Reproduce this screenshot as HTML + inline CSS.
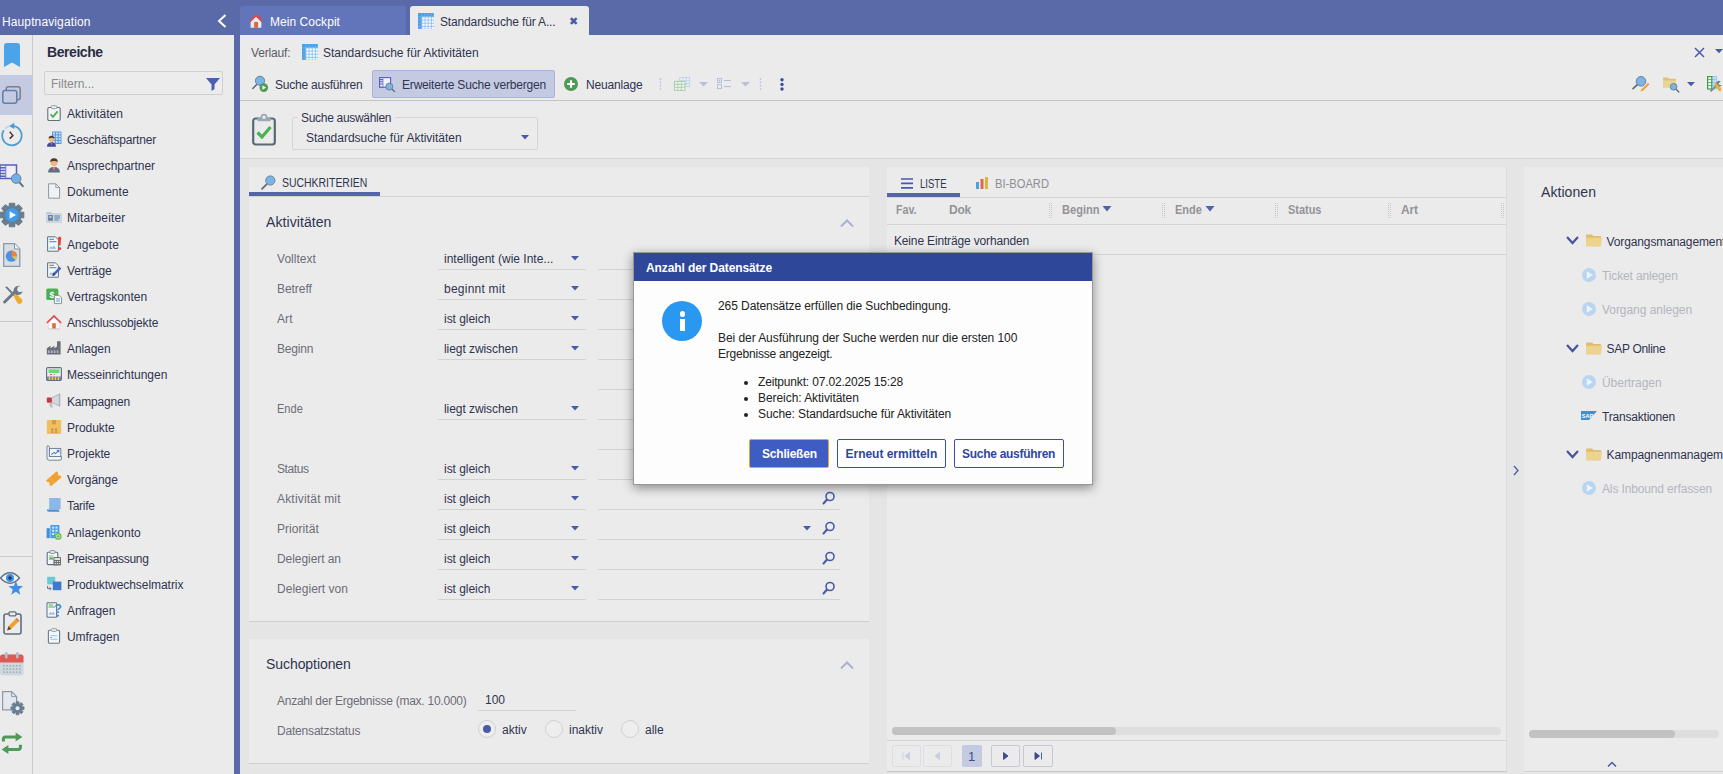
<!DOCTYPE html>
<html lang="de"><head><meta charset="utf-8"><title>Standardsuche für Aktivitäten</title>
<style>
*{box-sizing:border-box;margin:0;padding:0}
html,body{width:1723px;height:774px;overflow:hidden;background:#e5e5e5}
body{font-family:"Liberation Sans",sans-serif;font-size:12px;color:#2f3450;position:relative}
.a{position:absolute}
.t{position:absolute;white-space:nowrap;line-height:16px;height:16px}
.lbl{color:#6d6d78}
.ul{position:absolute;height:1px;background:#d2d2d2}
svg{position:absolute;overflow:visible}
</style></head>
<body>
<div class="a" style="left:0px;top:0px;width:1723px;height:35px;background:#5a69a8"></div>
<div class="t " style="left:2px;top:14px;color:#fff;letter-spacing:0.118px">Hauptnavigation</div>
<svg style="left:217px;top:14px" width="10" height="14" viewBox="0 0 10 14"><path d="M8.5 1 L2 7 L8.5 13" fill="none" stroke="#fff" stroke-width="2"/></svg>
<div class="a" style="left:240px;top:6px;width:166px;height:29px;background:#6275ba;border-radius:3px 3px 0 0"></div>
<div class="t " style="left:270px;top:14px;color:#fff;letter-spacing:0.053px">Mein Cockpit</div>
<div class="a" style="left:410px;top:6px;width:179px;height:29px;background:#ebebeb;border-radius:3px 3px 0 0"></div>
<div class="t " style="left:440px;top:14px;;letter-spacing:-0.148px">Standardsuche für A...</div>
<div class="t " style="left:569px;top:13px;color:#4a5aa8;font-size:11px">&#10006;</div>
<div class="a" style="left:0px;top:35px;width:33px;height:739px;background:#ebebeb;border-right:1px solid #c9c9c9"></div>
<div class="a" style="left:0px;top:75px;width:32px;height:40px;background:#c5cae3"></div>
<div class="a" style="left:0px;top:321px;width:32px;height:1px;background:#c9c9c9"></div>
<div class="a" style="left:0px;top:556px;width:32px;height:1px;background:#c9c9c9"></div>
<div class="a" style="left:33px;top:35px;width:201px;height:739px;background:#ebebeb"></div>
<div class="a" style="left:234px;top:35px;width:6px;height:739px;background:#5a69a8"></div>
<div class="t " style="left:47px;top:44px;font-weight:bold;font-size:14px;color:#2a2d45;letter-spacing:-0.432px">Bereiche</div>
<div class="a" style="left:44px;top:71px;width:179px;height:24px;border:1px solid #d0d0d0;border-radius:2px;background:#ececec"></div>
<div class="t " style="left:51px;top:76px;color:#8a8a8a">Filtern...</div>
<svg style="left:206px;top:77px" width="14" height="14" viewBox="0 0 14 14"><path d="M0 1 H14 L8.5 7.5 V12 L5.5 14 V7.5 Z" fill="#4a5fb0"/></svg>
<div class="t " style="left:67px;top:106px;;letter-spacing:0.058px">Aktivitäten</div>
<svg style="left:46px;top:105px" width="16" height="16" viewBox="0 0 16 16"><rect x="1.8" y="2.5" width="12.4" height="13" rx="1.3" fill="#f4f4f4" stroke="#5f7080" stroke-width="1.1"/><rect x="5.2" y="0.7" width="5.6" height="3" rx="1" fill="#ebebeb" stroke="#8a98a8" stroke-width="0.9"/><path d="M4.5 9.3 L7 11.8 L11.6 6.4" fill="none" stroke="#4caf50" stroke-width="1.8"/></svg>
<div class="t " style="left:67px;top:132px;;letter-spacing:-0.190px">Geschäftspartner</div>
<svg style="left:46px;top:131px" width="16" height="16" viewBox="0 0 16 16"><rect x="6" y="0.5" width="9.5" height="12.5" fill="#5a9ad8"/><rect x="7.0" y="1.6" width="1.8" height="1.7" fill="#d4e8fa"/><rect x="9.9" y="1.6" width="1.8" height="1.7" fill="#d4e8fa"/><rect x="12.8" y="1.6" width="1.8" height="1.7" fill="#d4e8fa"/><rect x="7.0" y="4.4" width="1.8" height="1.7" fill="#d4e8fa"/><rect x="9.9" y="4.4" width="1.8" height="1.7" fill="#d4e8fa"/><rect x="12.8" y="4.4" width="1.8" height="1.7" fill="#d4e8fa"/><rect x="7.0" y="7.199999999999999" width="1.8" height="1.7" fill="#d4e8fa"/><rect x="9.9" y="7.199999999999999" width="1.8" height="1.7" fill="#d4e8fa"/><rect x="12.8" y="7.199999999999999" width="1.8" height="1.7" fill="#d4e8fa"/><rect x="7.0" y="9.999999999999998" width="1.8" height="1.7" fill="#d4e8fa"/><rect x="9.9" y="9.999999999999998" width="1.8" height="1.7" fill="#d4e8fa"/><rect x="12.8" y="9.999999999999998" width="1.8" height="1.7" fill="#d4e8fa"/><path d="M0.9900000000000002 15.68 Q0.9900000000000002 11.58 5.5 11.251999999999999 Q10.01 11.58 10.01 15.68Z" fill="#3f4d96"/><path d="M4.352 11.416 L5.5 14.45 L6.648 11.416Z" fill="#e05a55"/><circle cx="5.5" cy="8.054" r="2.7059999999999995" fill="#f0b880"/><path d="M2.6300000000000003 7.644 Q2.712 4.692 5.5 4.856 Q8.288 4.692 8.37 7.644 Q5.5 6.0040000000000004 2.6300000000000003 7.644Z" fill="#4a3a30"/></svg>
<div class="t " style="left:67px;top:158px;;letter-spacing:-0.048px">Ansprechpartner</div>
<svg style="left:46px;top:157px" width="16" height="16" viewBox="0 0 16 16"><path d="M2.0599999999999996 15.620000000000001 Q2.0599999999999996 10.22 8 9.788 Q13.940000000000001 10.22 13.940000000000001 15.620000000000001Z" fill="#5f6f7c"/><path d="M6.4879999999999995 10.004000000000001 L8 14.0 L9.512 10.004000000000001Z" fill="#e87a8a"/><circle cx="8" cy="5.5760000000000005" r="3.564" fill="#f0b880"/><path d="M4.22 5.0360000000000005 Q4.327999999999999 1.1480000000000001 8 1.364 Q11.672 1.1480000000000001 11.780000000000001 5.0360000000000005 Q8 2.8760000000000003 4.22 5.0360000000000005Z" fill="#4a3a30"/></svg>
<div class="t " style="left:67px;top:184px;;letter-spacing:0.025px">Dokumente</div>
<svg style="left:46px;top:183px" width="16" height="16" viewBox="0 0 16 16"><path d="M2.6 0.8 H9.8 L13.6 4.6 V15.2 H2.6Z" fill="#f1f2f4" stroke="#8a98a8" stroke-width="1"/><path d="M9.8 0.8 V4.6 H13.6" fill="none" stroke="#8a98a8" stroke-width="0.9"/></svg>
<div class="t " style="left:67px;top:210px;;letter-spacing:0.165px">Mitarbeiter</div>
<svg style="left:46px;top:209px" width="16" height="16" viewBox="0 0 16 16"><path d="M0.5 3.2 H5 L6 4.4 H15.5 V13.6 H0.5Z" fill="#a9c0d2"/><rect x="1" y="4.6" width="14.5" height="9" fill="#c8d8e4"/><rect x="2.2" y="6" width="4.6" height="5.6" fill="#3f7fc8"/><circle cx="4.5" cy="8" r="1.3" fill="#f0b880"/><path d="M2.6 11.6 Q4.5 8.6 6.4 11.6Z" fill="#e05a55"/><path d="M8.4 7H14M8.4 9H14M8.4 11H12.5" stroke="#5f7f9a" stroke-width="1.1"/></svg>
<div class="t " style="left:67px;top:237px;;letter-spacing:0.064px">Angebote</div>
<svg style="left:46px;top:236px" width="16" height="16" viewBox="0 0 16 16"><path d="M1.6 0.8 H9.4 L12.4 3.8 V15.2 H1.6Z" fill="#f3f6f8" stroke="#5f7080" stroke-width="1"/><path d="M3.4 3.4H8M3.4 5.6H10.4" stroke="#4a9fe8" stroke-width="1.2"/><path d="M3.2 12.8 L5 10.2 L6.4 11.8 L8 9.6 L10 12.8Z" fill="#8ab8e0"/><path d="M12 2.2 Q12 0.6 13.6 0.6 Q15.2 0.6 15.2 2.2 L14.5 9.6 H12.7Z" fill="#e8453d"/><circle cx="13.6" cy="12.6" r="1.6" fill="#e8453d"/></svg>
<div class="t " style="left:67px;top:263px;;letter-spacing:-0.097px">Verträge</div>
<svg style="left:46px;top:262px" width="16" height="16" viewBox="0 0 16 16"><path d="M1.6 0.8 H9.4 L12.4 3.8 V15.2 H1.6Z" fill="#f3f6f8" stroke="#5f7080" stroke-width="1"/><path d="M3.4 3.4H8M3.4 5.6H10.4" stroke="#4a9fe8" stroke-width="1.2"/><path d="M3.2 12.8 L5 10.2 L6.4 11.8 L8 9.6 L10 12.8Z" fill="#8ab8e0"/><path d="M6.4 14 L7.2 11.2 L13.6 4.8 L15.4 6.6 L9 13.1Z" fill="#4a5fc0"/><path d="M6.4 14 L7.2 11.2 L9 13.1Z" fill="#2b2f48"/></svg>
<div class="t " style="left:67px;top:289px;;letter-spacing:-0.051px">Vertragskonten</div>
<svg style="left:46px;top:288px" width="16" height="16" viewBox="0 0 16 16"><rect x="0.3" y="0.6" width="12" height="11.4" rx="1.6" fill="#4caf50"/><text x="3.600" y="9.600" font-size="9" font-weight="bold" fill="#fff" font-family="Liberation Sans,sans-serif">$</text><path d="M8.4 7.4 H13.2 L15.6 9.8 V15.6 H8.4Z" fill="#f3f6f8" stroke="#7a8a9a" stroke-width="0.9"/><path d="M10 11H14M10 13H14" stroke="#5a9ad8" stroke-width="0.9"/></svg>
<div class="t " style="left:67px;top:315px;;letter-spacing:-0.137px">Anschlussobjekte</div>
<svg style="left:46px;top:314px" width="16" height="16" viewBox="0 0 16 16"><path d="M2.600 8 V15 H13.400 V8 L8 2.800Z" fill="#fbfbfb" stroke="#d4d4d8" stroke-width="0.600"/><path d="M0.2 8.4 L8 0.8 L15.8 8.4 L14.6 9.6 L8 3.2 L1.4 9.6Z" fill="#e05050"/><rect x="6.2" y="9.2" width="3.6" height="5.8" fill="#e8663a"/><rect x="2.6" y="14.4" width="10.8" height="0.9" fill="#d0d0d0"/></svg>
<div class="t " style="left:67px;top:341px;;letter-spacing:-0.078px">Anlagen</div>
<svg style="left:46px;top:340px" width="16" height="16" viewBox="0 0 16 16"><path d="M0.8 14.6 V8.2 L4.6 5.8 V8.2 L8.4 5.8 V8.2 L11 6.6 V1.2 H14.6 V14.6Z" fill="#6a7078"/><rect x="2.0" y="10.4" width="1.7" height="2.6" fill="#b8a8d8"/><rect x="4.9" y="10.4" width="1.7" height="2.6" fill="#b8a8d8"/><rect x="7.8" y="10.4" width="1.7" height="2.6" fill="#b8a8d8"/><rect x="10.7" y="10.4" width="1.7" height="2.6" fill="#b8a8d8"/></svg>
<div class="t " style="left:67px;top:367px;;letter-spacing:-0.026px">Messeinrichtungen</div>
<svg style="left:46px;top:366px" width="16" height="16" viewBox="0 0 16 16"><rect x="0.6" y="1.6" width="14.8" height="12.8" rx="1.2" fill="#e8ecee" stroke="#5f7080" stroke-width="1.1"/><rect x="2.6" y="3.4" width="10.8" height="3.6" fill="#6ad870"/><path d="M4 8.6H6M7.6 8.6H8.6" stroke="#e05050" stroke-width="1"/><rect x="1.2" y="10.6" width="13.6" height="3.4" fill="#5f7080"/><rect x="2.6" y="11" width="1.7" height="3" fill="#f0d040"/><rect x="5.6" y="11" width="1.7" height="3" fill="#f0d040"/><rect x="8.6" y="11" width="1.7" height="3" fill="#f0d040"/><rect x="11.6" y="11" width="1.7" height="3" fill="#f0d040"/></svg>
<div class="t " style="left:67px;top:394px;;letter-spacing:-0.191px">Kampagnen</div>
<svg style="left:46px;top:393px" width="16" height="16" viewBox="0 0 16 16"><path d="M5.6 5 L13.4 1 V13 L5.6 9.4Z" fill="#d4d8dc" stroke="#9aa4ac" stroke-width="0.7"/><rect x="13" y="0.6" width="1.3" height="12.8" fill="#aab2b8"/><rect x="0.8" y="4.6" width="5" height="5.2" rx="1" fill="#c83840"/><path d="M3 9.8 H6 L6.8 14.6 H4.2Z" fill="#b8c0c6"/></svg>
<div class="t " style="left:67px;top:420px;;letter-spacing:-0.041px">Produkte</div>
<svg style="left:46px;top:419px" width="16" height="16" viewBox="0 0 16 16"><rect x="0.8" y="1" width="14.4" height="14" rx="1" fill="#f0c060"/><rect x="6" y="1" width="4" height="4.4" fill="#e8905a"/><path d="M5 13.2H7.4M8.8 13.2H11.2M6.2 12.6V9.8M10 12.6V9.8M5.2 10.8L6.2 9.6L7.2 10.8M9 10.8L10 9.6L11 10.8" stroke="#b87838" stroke-width="0.8" fill="none"/></svg>
<div class="t " style="left:67px;top:446px;;letter-spacing:-0.104px">Projekte</div>
<svg style="left:46px;top:445px" width="16" height="16" viewBox="0 0 16 16"><path d="M1 1 Q1 0.6 2 0.8 Q3.4 1 3.4 2.4 V11.4 H15.4 V14.2 Q15.4 15.2 14 15.2 H3 Q1 15.2 1 13Z" fill="#f3f6f8" stroke="#6a7a8a" stroke-width="0.9"/><rect x="3.4" y="3.4" width="11.4" height="8" fill="#f3f6f8" stroke="#6a7a8a" stroke-width="0.9"/><path d="M5.4 9.6 L8 7.4 L9.4 8.6 L12.6 5.6 M10.8 5.4H12.8V7.4" fill="none" stroke="#3f7fd0" stroke-width="1.1"/></svg>
<div class="t " style="left:67px;top:472px;;letter-spacing:-0.074px">Vorgänge</div>
<svg style="left:46px;top:471px" width="16" height="16" viewBox="0 0 16 16"><g transform="rotate(-40 8 8) translate(0.8,0.5) scale(0.9)"><path d="M0.2 3.8 H15.800 V6.6 A1.4 1.4 0 0 0 15.8 9.4 V12.2 H0.2 V9.4 A1.4 1.4 0 0 0 0.2 6.6Z" fill="#f2a030"/><path d="M5 3.8V12.2" stroke="#f6c070" stroke-width="0.8" stroke-dasharray="1.4 1"/></g></svg>
<div class="t " style="left:67px;top:498px;;letter-spacing:-0.291px">Tarife</div>
<svg style="left:46px;top:497px" width="16" height="16" viewBox="0 0 16 16"><path d="M3.2 1 H14.6 V12.4 H3.2Z" fill="#8ab8e8"/><path d="M0.8 12.4 H12.6 Q12.6 14.8 14.6 14.8 H3 Q0.8 14.8 0.8 12.4Z" fill="#4a8fd8"/></svg>
<div class="t " style="left:67px;top:525px;;letter-spacing:0.033px">Anlagenkonto</div>
<svg style="left:46px;top:524px" width="16" height="16" viewBox="0 0 16 16"><rect x="0.6" y="4.2" width="3.2" height="10" fill="#3f8fd8"/><rect x="4.4" y="1" width="9" height="13.2" fill="#4a9fe8"/><rect x="6.0" y="2.6" width="2.2" height="2" fill="#cfe4f8"/><rect x="9.4" y="2.6" width="2.2" height="2" fill="#cfe4f8"/><rect x="6.0" y="5.800000000000001" width="2.2" height="2" fill="#cfe4f8"/><rect x="9.4" y="5.800000000000001" width="2.2" height="2" fill="#cfe4f8"/><rect x="6.0" y="9.0" width="2.2" height="2" fill="#cfe4f8"/><rect x="9.4" y="9.0" width="2.2" height="2" fill="#cfe4f8"/><circle cx="12.2" cy="12.4" r="3.4" fill="#6ab850"/><circle cx="12.2" cy="12.4" r="1.7" fill="none" stroke="#e4f4d8" stroke-width="0.8"/></svg>
<div class="t " style="left:67px;top:551px;;letter-spacing:-0.326px">Preisanpassung</div>
<svg style="left:46px;top:550px" width="16" height="16" viewBox="0 0 16 16"><rect x="1.2" y="2.2" width="10.6" height="12.4" rx="1" fill="#f3f6f8" stroke="#5f7080" stroke-width="1.1"/><rect x="4" y="0.6" width="5" height="2.8" rx="0.9" fill="#ebebeb" stroke="#7a8a9a" stroke-width="0.9"/><rect x="3" y="5" width="4.4" height="4.4" fill="#b8d8b0"/><path d="M3 9.4 L4.6 7 L5.6 8.2 L6.4 7.400 L7.4 9.4Z" fill="#4caf50"/><rect x="7.4" y="7" width="7.6" height="8.6" rx="0.8" fill="#6a7078"/><rect x="8.4" y="8" width="5.600" height="2" fill="#d8e4d8"/><path d="M8.8 11.6H10M10.8 11.6H12M12.8 11.6H14M8.8 13.6H10M10.8 13.6H12M12.8 13.6H14" stroke="#e0e0e0" stroke-width="1"/></svg>
<div class="t " style="left:67px;top:577px;;letter-spacing:-0.049px">Produktwechselmatrix</div>
<svg style="left:46px;top:576px" width="16" height="16" viewBox="0 0 16 16"><rect x="1.2" y="0.8" width="8" height="7.6" fill="#6ac8d0"/><rect x="6.800" y="5.6" width="8.6" height="8.6" fill="#3f78d0"/><path d="M1.600 10 V12.6 H5 M3.600 11.2 L5.2 12.6 L3.6 14" fill="none" stroke="#5f7080" stroke-width="1"/></svg>
<div class="t " style="left:67px;top:603px;;letter-spacing:-0.050px">Anfragen</div>
<svg style="left:46px;top:602px" width="16" height="16" viewBox="0 0 16 16"><path d="M1 0.800 H10.600 V15.2 H1Z" fill="#f3f6f8" stroke="#5f7080" stroke-width="1"/><path d="M2.6 3H7M2.6 5H9" stroke="#4caf50" stroke-width="1.1"/><path d="M2.6 12.6 L4.4 10 L5.8 11.600 L7.2 9.800 L9 12.6Z" fill="#8ab8e0"/><text x="8.2" y="11" font-size="12.5" font-weight="bold" fill="#3f8fd8" font-family="Liberation Sans,sans-serif">?</text><circle cx="11.8" cy="13.6" r="1.2" fill="#3f8fd8"/></svg>
<div class="t " style="left:67px;top:629px;;letter-spacing:-0.048px">Umfragen</div>
<svg style="left:46px;top:628px" width="16" height="16" viewBox="0 0 16 16"><rect x="2.4" y="2.2" width="11.2" height="13" rx="1.2" fill="#f3f6f8" stroke="#6a7a8a" stroke-width="1.1"/><rect x="5.400" y="0.6" width="5.2" height="2.800" rx="0.9" fill="#ebebeb" stroke="#8a98a8" stroke-width="0.9"/><path d="M4.600 7.6H11.400M4.600 11.400H11.400" stroke="#a8d0f0" stroke-width="1.4"/><path d="M4.600 9.5H6" stroke="#5a9ad8" stroke-width="1.2"/></svg>
<div class="a" style="left:240px;top:35px;width:1483px;height:124px;background:#ebebeb"></div>
<div class="a" style="left:240px;top:100px;width:1483px;height:1px;background:#c3c3c3"></div>
<div class="a" style="left:240px;top:158px;width:1483px;height:1px;background:#d6d6d6"></div>
<div class="t " style="left:251px;top:45px;color:#5a5a66;letter-spacing:-0.163px">Verlauf:</div>
<div class="t " style="left:323px;top:45px;;letter-spacing:-0.017px">Standardsuche für Aktivitäten</div>
<div class="t " style="left:275px;top:77px;;letter-spacing:-0.222px">Suche ausführen</div>
<div class="a" style="left:372px;top:70px;width:183px;height:28px;background:#c5cae3;border:1px solid #a9b3e0;border-radius:2px"></div>
<div class="t " style="left:402px;top:77px;;letter-spacing:-0.183px">Erweiterte Suche verbergen</div>
<div class="t " style="left:586px;top:77px;;letter-spacing:-0.174px">Neuanlage</div>
<div class="a" style="left:292px;top:117px;width:246px;height:33px;border:1px solid #d5d5d5;border-radius:2px"></div>
<div class="a" style="left:298px;top:110px;width:97px;height:14px;background:#ebebeb"></div>
<div class="t " style="left:301px;top:110px;;letter-spacing:-0.302px">Suche auswählen</div>
<div class="t " style="left:306px;top:130px;;letter-spacing:-0.017px">Standardsuche für Aktivitäten</div>
<svg style="left:521px;top:135px" width="8" height="5"><path d="M0 0H8L4 4.400Z" fill="#4a5aa8"/></svg>
<div class="a" style="left:249px;top:167px;width:620px;height:455px;background:#ebebeb;border-bottom:1px solid #cfcfcf"></div>
<div class="a" style="left:249px;top:196px;width:620px;height:1px;background:#d4d4d4"></div>
<div class="a" style="left:249px;top:192px;width:131px;height:4px;background:#5566a8"></div>
<div class="t " style="left:282px;top:175px;;transform:scaleX(0.8703);transform-origin:0 50%">SUCHKRITERIEN</div>
<div class="t " style="left:266px;top:214px;font-size:14px;letter-spacing:0.082px">Aktivitäten</div>
<div class="t lbl" style="left:277px;top:251px;;letter-spacing:0.037px">Volltext</div>
<div class="t " style="left:444px;top:251px;;letter-spacing:-0.004px">intelligent (wie Inte...</div>
<svg style="left:571px;top:256px" width="8" height="5"><path d="M0 0H8L4 4.400Z" fill="#4a5aa8"/></svg>
<div class="a" style="left:438px;top:269px;width:148px;height:1px;background:#d2d2d2"></div>
<div class="a" style="left:598px;top:269px;width:242px;height:1px;background:#d2d2d2"></div>
<div class="t lbl" style="left:277px;top:281px;;letter-spacing:-0.049px">Betreff</div>
<div class="t " style="left:444px;top:281px;;letter-spacing:0.236px">beginnt mit</div>
<svg style="left:571px;top:286px" width="8" height="5"><path d="M0 0H8L4 4.400Z" fill="#4a5aa8"/></svg>
<div class="a" style="left:438px;top:299px;width:148px;height:1px;background:#d2d2d2"></div>
<div class="a" style="left:598px;top:299px;width:242px;height:1px;background:#d2d2d2"></div>
<div class="t lbl" style="left:277px;top:311px;;letter-spacing:0.119px">Art</div>
<div class="t " style="left:444px;top:311px;;letter-spacing:-0.039px">ist gleich</div>
<svg style="left:571px;top:316px" width="8" height="5"><path d="M0 0H8L4 4.400Z" fill="#4a5aa8"/></svg>
<div class="a" style="left:438px;top:329px;width:148px;height:1px;background:#d2d2d2"></div>
<div class="a" style="left:598px;top:329px;width:242px;height:1px;background:#d2d2d2"></div>
<div class="t lbl" style="left:277px;top:341px;;letter-spacing:-0.196px">Beginn</div>
<div class="t " style="left:444px;top:341px;;letter-spacing:-0.065px">liegt zwischen</div>
<svg style="left:571px;top:346px" width="8" height="5"><path d="M0 0H8L4 4.400Z" fill="#4a5aa8"/></svg>
<div class="a" style="left:438px;top:359px;width:148px;height:1px;background:#d2d2d2"></div>
<div class="a" style="left:598px;top:359px;width:242px;height:1px;background:#d2d2d2"></div>
<div class="a" style="left:598px;top:389px;width:242px;height:1px;background:#d2d2d2"></div>
<div class="t lbl" style="left:277px;top:401px;;transform:scaleX(0.9204);transform-origin:0 50%">Ende</div>
<div class="t " style="left:444px;top:401px;;letter-spacing:-0.065px">liegt zwischen</div>
<svg style="left:571px;top:406px" width="8" height="5"><path d="M0 0H8L4 4.400Z" fill="#4a5aa8"/></svg>
<div class="a" style="left:438px;top:419px;width:148px;height:1px;background:#d2d2d2"></div>
<div class="a" style="left:598px;top:419px;width:242px;height:1px;background:#d2d2d2"></div>
<div class="a" style="left:598px;top:449px;width:242px;height:1px;background:#d2d2d2"></div>
<div class="t lbl" style="left:277px;top:461px;;letter-spacing:-0.389px">Status</div>
<div class="t " style="left:444px;top:461px;;letter-spacing:-0.039px">ist gleich</div>
<svg style="left:571px;top:466px" width="8" height="5"><path d="M0 0H8L4 4.400Z" fill="#4a5aa8"/></svg>
<div class="a" style="left:438px;top:479px;width:148px;height:1px;background:#d2d2d2"></div>
<div class="a" style="left:598px;top:479px;width:242px;height:1px;background:#d2d2d2"></div>
<div class="t lbl" style="left:277px;top:491px;;letter-spacing:0.181px">Aktivität mit</div>
<div class="t " style="left:444px;top:491px;;letter-spacing:-0.039px">ist gleich</div>
<svg style="left:571px;top:496px" width="8" height="5"><path d="M0 0H8L4 4.400Z" fill="#4a5aa8"/></svg>
<div class="a" style="left:438px;top:509px;width:148px;height:1px;background:#d2d2d2"></div>
<div class="a" style="left:598px;top:509px;width:242px;height:1px;background:#d2d2d2"></div>
<div class="t lbl" style="left:277px;top:521px;;letter-spacing:0.051px">Priorität</div>
<div class="t " style="left:444px;top:521px;;letter-spacing:-0.039px">ist gleich</div>
<svg style="left:571px;top:526px" width="8" height="5"><path d="M0 0H8L4 4.400Z" fill="#4a5aa8"/></svg>
<div class="a" style="left:438px;top:539px;width:148px;height:1px;background:#d2d2d2"></div>
<div class="a" style="left:598px;top:539px;width:242px;height:1px;background:#d2d2d2"></div>
<div class="t lbl" style="left:277px;top:551px;;letter-spacing:-0.060px">Delegiert an</div>
<div class="t " style="left:444px;top:551px;;letter-spacing:-0.039px">ist gleich</div>
<svg style="left:571px;top:556px" width="8" height="5"><path d="M0 0H8L4 4.400Z" fill="#4a5aa8"/></svg>
<div class="a" style="left:438px;top:569px;width:148px;height:1px;background:#d2d2d2"></div>
<div class="a" style="left:598px;top:569px;width:242px;height:1px;background:#d2d2d2"></div>
<div class="t lbl" style="left:277px;top:581px;;letter-spacing:0.022px">Delegiert von</div>
<div class="t " style="left:444px;top:581px;;letter-spacing:-0.039px">ist gleich</div>
<svg style="left:571px;top:586px" width="8" height="5"><path d="M0 0H8L4 4.400Z" fill="#4a5aa8"/></svg>
<div class="a" style="left:438px;top:599px;width:148px;height:1px;background:#d2d2d2"></div>
<div class="a" style="left:598px;top:599px;width:242px;height:1px;background:#d2d2d2"></div>
<svg style="left:822px;top:491px" width="14" height="14" viewBox="0 0 14 14"><circle cx="8" cy="5.5" r="4" fill="none" stroke="#4a5aa8" stroke-width="1.6"/><path d="M5 8.5 L1.5 12.5" stroke="#4a5aa8" stroke-width="2" stroke-linecap="round"/></svg>
<svg style="left:822px;top:521px" width="14" height="14" viewBox="0 0 14 14"><circle cx="8" cy="5.5" r="4" fill="none" stroke="#4a5aa8" stroke-width="1.6"/><path d="M5 8.5 L1.5 12.5" stroke="#4a5aa8" stroke-width="2" stroke-linecap="round"/></svg>
<svg style="left:822px;top:551px" width="14" height="14" viewBox="0 0 14 14"><circle cx="8" cy="5.5" r="4" fill="none" stroke="#4a5aa8" stroke-width="1.6"/><path d="M5 8.5 L1.5 12.5" stroke="#4a5aa8" stroke-width="2" stroke-linecap="round"/></svg>
<svg style="left:822px;top:581px" width="14" height="14" viewBox="0 0 14 14"><circle cx="8" cy="5.5" r="4" fill="none" stroke="#4a5aa8" stroke-width="1.6"/><path d="M5 8.5 L1.5 12.5" stroke="#4a5aa8" stroke-width="2" stroke-linecap="round"/></svg>
<svg style="left:803px;top:526px" width="8" height="5"><path d="M0 0H8L4 4.400Z" fill="#4a5aa8"/></svg>
<svg style="left:840px;top:219px" width="14" height="8"><path d="M1 7.5 L7 1.5 L13 7.5" fill="none" stroke="#aab1d3" stroke-width="2"/></svg>
<div class="a" style="left:249px;top:639px;width:620px;height:125px;background:#ebebeb;border-bottom:1px solid #cfcfcf"></div>
<div class="t " style="left:266px;top:656px;font-size:14px;letter-spacing:-0.070px">Suchoptionen</div>
<svg style="left:840px;top:661px" width="14" height="8"><path d="M1 7.5 L7 1.5 L13 7.5" fill="none" stroke="#aab1d3" stroke-width="2"/></svg>
<div class="t lbl" style="left:277px;top:693px;;letter-spacing:-0.246px">Anzahl der Ergebnisse (max. 10.000)</div>
<div class="t " style="left:485px;top:692px;">100</div>
<div class="a" style="left:478px;top:710px;width:98px;height:1px;background:#d2d2d2"></div>
<div class="t lbl" style="left:277px;top:723px;;letter-spacing:-0.190px">Datensatzstatus</div>
<div class="a" style="left:478px;top:720px;width:18px;height:18px;border:1px solid #d0d0d0;border-radius:50%;background:#eee"></div>
<div class="a" style="left:483px;top:725px;width:8px;height:8px;border-radius:50%;background:#4a5aa8"></div>
<div class="t " style="left:502px;top:722px;">aktiv</div>
<div class="a" style="left:545px;top:720px;width:18px;height:18px;border:1px solid #d0d0d0;border-radius:50%;background:#eee"></div>
<div class="t " style="left:569px;top:722px;">inaktiv</div>
<div class="a" style="left:621px;top:720px;width:18px;height:18px;border:1px solid #d0d0d0;border-radius:50%;background:#eee"></div>
<div class="t " style="left:645px;top:722px;">alle</div>
<div class="a" style="left:887px;top:167px;width:620px;height:605px;background:#ebebeb;border-bottom:1px solid #c4c4c4;border-right:1px solid #dcdcdc"></div>
<div class="a" style="left:887px;top:193px;width:73px;height:4px;background:#5566a8"></div>
<div class="a" style="left:887px;top:197px;width:620px;height:1px;background:#d4d4d4"></div>
<div class="t " style="left:920px;top:176px;;transform:scaleX(0.7944);transform-origin:0 50%">LISTE</div>
<div class="t " style="left:995px;top:176px;color:#8e8e96;transform:scaleX(0.9308);transform-origin:0 50%">BI-BOARD</div>
<svg style="left:901px;top:178px" width="12" height="11"><path d="M0 1H12M0 5.400H12M0 9.800H12" stroke="#4a5aa8" stroke-width="1.700"/></svg>
<svg style="left:976px;top:177px" width="12" height="12"><rect x="0" y="5" width="3" height="7" fill="#4aa3d8"/><rect x="4.5" y="2" width="3" height="10" fill="#e0674a"/><rect x="9" y="0" width="3" height="12" fill="#e2b33c"/></svg>
<div class="t " style="left:896px;top:202px;font-weight:bold;color:#939398;transform:scaleX(0.8865);transform-origin:0 50%">Fav.</div>
<div class="t " style="left:949px;top:202px;font-weight:bold;color:#939398;letter-spacing:-0.224px">Dok</div>
<div class="t " style="left:1062px;top:202px;font-weight:bold;color:#939398;transform:scaleX(0.9220);transform-origin:0 50%">Beginn</div>
<div class="t " style="left:1175px;top:202px;font-weight:bold;color:#939398;transform:scaleX(0.9133);transform-origin:0 50%">Ende</div>
<div class="t " style="left:1288px;top:202px;font-weight:bold;color:#939398;transform:scaleX(0.9104);transform-origin:0 50%">Status</div>
<div class="t " style="left:1401px;top:202px;font-weight:bold;color:#939398;letter-spacing:-0.115px">Art</div>
<svg style="left:1102px;top:206px" width="10" height="6"><path d="M0.500 0H9.500L5 5.400Z" fill="#5362ac"/></svg>
<svg style="left:1205px;top:206px" width="10" height="6"><path d="M0.500 0H9.500L5 5.400Z" fill="#5362ac"/></svg>
<svg style="left:1049px;top:203px" width="3" height="15"><path d="M0.5 0V15M2.5 0V15" stroke="#c6c6c6" stroke-width="1" stroke-dasharray="1 1"/></svg>
<svg style="left:1162px;top:203px" width="3" height="15"><path d="M0.5 0V15M2.5 0V15" stroke="#c6c6c6" stroke-width="1" stroke-dasharray="1 1"/></svg>
<svg style="left:1275px;top:203px" width="3" height="15"><path d="M0.5 0V15M2.5 0V15" stroke="#c6c6c6" stroke-width="1" stroke-dasharray="1 1"/></svg>
<svg style="left:1388px;top:203px" width="3" height="15"><path d="M0.5 0V15M2.5 0V15" stroke="#c6c6c6" stroke-width="1" stroke-dasharray="1 1"/></svg>
<svg style="left:1501px;top:203px" width="3" height="15"><path d="M0.5 0V15M2.5 0V15" stroke="#c6c6c6" stroke-width="1" stroke-dasharray="1 1"/></svg>
<div class="a" style="left:887px;top:224px;width:620px;height:1px;background:#d4d4d4"></div>
<div class="t " style="left:894px;top:233px;;letter-spacing:-0.158px">Keine Einträge vorhanden</div>
<div class="a" style="left:887px;top:254px;width:620px;height:1px;background:#d4d4d4"></div>
<div class="a" style="left:892px;top:727px;width:609px;height:8px;background:#dedede;border-radius:4px"></div>
<div class="a" style="left:892px;top:727px;width:224px;height:8px;background:#c2c2c2;border-radius:4px"></div>
<div class="a" style="left:887px;top:740px;width:620px;height:1px;background:#d4d4d4"></div>
<div class="a" style="left:892px;top:745px;width:29px;height:22px;border:1px solid #dddde3;border-radius:2px"></div>
<svg style="left:0;top:0" width="1" height="1"><path d="M903.0 752.5 V759.5 M909.5 752.5 L905.0 756 L909.5 759.5Z" fill="#c9cce0" stroke="#c9cce0" stroke-width="0.9"/></svg>
<div class="a" style="left:923px;top:745px;width:29px;height:22px;border:1px solid #dddde3;border-radius:2px"></div>
<svg style="left:0;top:0" width="1" height="1"><path d="M939.5 752.5 L935.0 756 L939.5 759.5Z" fill="#c9cce0" stroke="#c9cce0" stroke-width="0.9"/></svg>
<div class="a" style="left:991px;top:745px;width:29px;height:22px;border:1px solid #c6c8d6;border-radius:2px"></div>
<svg style="left:0;top:0" width="1" height="1"><path d="M1003.5 752.5 L1008.0 756 L1003.5 759.5Z" fill="#3d4a8f" stroke="#3d4a8f" stroke-width="0.9"/></svg>
<div class="a" style="left:1023px;top:745px;width:30px;height:22px;border:1px solid #c6c8d6;border-radius:2px"></div>
<svg style="left:0;top:0" width="1" height="1"><path d="M1041.5 752.5 V759.5 M1035.0 752.5 L1039.5 756 L1035.0 759.5Z" fill="#3d4a8f" stroke="#3d4a8f" stroke-width="0.9"/></svg>
<div class="a" style="left:962px;top:745px;width:20px;height:22px;background:#c5cae3;border-radius:2px"></div>
<div class="t " style="left:968px;top:749px;font-size:13px;color:#3d4a8f">1</div>
<svg style="left:1513px;top:465px" width="6" height="11"><path d="M1 1 L5 5.5 L1 10" fill="none" stroke="#4a5aa8" stroke-width="1.3"/></svg>
<div class="a" style="left:1524px;top:167px;width:199px;height:606px;background:#ebebeb"></div>
<div class="t " style="left:1541px;top:184px;font-size:14px;letter-spacing:0.064px">Aktionen</div>
<svg style="left:1566px;top:236px" width="13" height="8"><path d="M1 1 L6.5 7 L12 1" fill="none" stroke="#46549c" stroke-width="2.200"/></svg>
<svg style="left:1586px;top:233.5px" width="16" height="12.2" viewBox="0 0 16 13" preserveAspectRatio="none"><path d="M0 1.5 Q0 0.5 1 0.5 H6 L7.5 2 H14 Q15 2 15 3 V12 Q15 13 14 13 H1 Q0 13 0 12Z" fill="#e0bc6c"/><path d="M0 4 H15.5 Q16 4 16 4.8 L15 12.2 Q14.9 13 14 13 H1 Q0 13 0 12Z" fill="#ecd48e"/></svg>
<div class="t " style="left:1606.5px;top:234px;;letter-spacing:-0.113px">Vorgangsmanagement</div>
<svg style="left:1566px;top:344px" width="13" height="8"><path d="M1 1 L6.5 7 L12 1" fill="none" stroke="#46549c" stroke-width="2.200"/></svg>
<svg style="left:1586px;top:341.5px" width="16" height="12.2" viewBox="0 0 16 13" preserveAspectRatio="none"><path d="M0 1.5 Q0 0.5 1 0.5 H6 L7.5 2 H14 Q15 2 15 3 V12 Q15 13 14 13 H1 Q0 13 0 12Z" fill="#e0bc6c"/><path d="M0 4 H15.5 Q16 4 16 4.8 L15 12.2 Q14.9 13 14 13 H1 Q0 13 0 12Z" fill="#ecd48e"/></svg>
<div class="t " style="left:1606.5px;top:341px;;letter-spacing:-0.303px">SAP Online</div>
<svg style="left:1566px;top:450px" width="13" height="8"><path d="M1 1 L6.5 7 L12 1" fill="none" stroke="#46549c" stroke-width="2.200"/></svg>
<svg style="left:1586px;top:447.5px" width="16" height="12.2" viewBox="0 0 16 13" preserveAspectRatio="none"><path d="M0 1.5 Q0 0.5 1 0.5 H6 L7.5 2 H14 Q15 2 15 3 V12 Q15 13 14 13 H1 Q0 13 0 12Z" fill="#e0bc6c"/><path d="M0 4 H15.5 Q16 4 16 4.8 L15 12.2 Q14.9 13 14 13 H1 Q0 13 0 12Z" fill="#ecd48e"/></svg>
<div class="t " style="left:1606.5px;top:447px;;letter-spacing:-0.099px">Kampagnenmanagement</div>
<svg style="left:1582px;top:268.3px" width="14" height="14" viewBox="0 0 14 14"><circle cx="7" cy="7" r="7" fill="#b9d5f0"/><path d="M4.800 3.200 L10.800 7 L4.800 10.800Z" fill="#edf4fc"/></svg>
<div class="t " style="left:1602px;top:268px;color:#b4b6c0;letter-spacing:-0.136px">Ticket anlegen</div>
<svg style="left:1582px;top:302.3px" width="14" height="14" viewBox="0 0 14 14"><circle cx="7" cy="7" r="7" fill="#b9d5f0"/><path d="M4.800 3.200 L10.800 7 L4.800 10.800Z" fill="#edf4fc"/></svg>
<div class="t " style="left:1602px;top:302px;color:#b4b6c0;letter-spacing:-0.050px">Vorgang anlegen</div>
<svg style="left:1582px;top:375.3px" width="14" height="14" viewBox="0 0 14 14"><circle cx="7" cy="7" r="7" fill="#b9d5f0"/><path d="M4.800 3.200 L10.800 7 L4.800 10.800Z" fill="#edf4fc"/></svg>
<div class="t " style="left:1602px;top:375px;color:#b4b6c0;letter-spacing:-0.045px">Übertragen</div>
<svg style="left:1582px;top:481.3px" width="14" height="14" viewBox="0 0 14 14"><circle cx="7" cy="7" r="7" fill="#b9d5f0"/><path d="M4.800 3.200 L10.800 7 L4.800 10.800Z" fill="#edf4fc"/></svg>
<div class="t " style="left:1602px;top:481px;color:#b4b6c0;letter-spacing:-0.138px">Als Inbound erfassen</div>
<div class="t " style="left:1602px;top:409px;;letter-spacing:-0.201px">Transaktionen</div>
<svg style="left:1581px;top:411px" width="16" height="9" viewBox="0 0 16 9"><path d="M0 0H16L8 9H0Z" fill="#3f8fd8"/><text x="0.8" y="6.6" font-size="5.5" font-weight="bold" fill="#fff" font-family="Liberation Sans,sans-serif">SAP</text></svg>
<div class="a" style="left:1529px;top:730px;width:190px;height:8px;background:#dedede;border-radius:4px"></div>
<div class="a" style="left:1529px;top:730px;width:146px;height:8px;background:#c2c2c2;border-radius:4px"></div>
<svg style="left:1607px;top:761px" width="10" height="6"><path d="M1 5.5 L5 1.5 L9 5.5" fill="none" stroke="#4a5aa8" stroke-width="1.5"/></svg>
<div class="a" style="left:1524px;top:771px;width:199px;height:1px;background:#d0d0d0"></div>
<svg style="left:1694px;top:47px" width="11" height="11"><path d="M1 1L10 10M10 1L1 10" stroke="#4a5aa8" stroke-width="1.5"/></svg>
<svg style="left:1715px;top:49px" width="8" height="5"><path d="M0 0H8L4 4.2Z" fill="#4a5aa8"/></svg>
<svg style="left:249px;top:14px" width="14" height="14" viewBox="0 0 14 14"><path d="M1.600 7 V13.800 H12.400 V7 L7 2.200Z" fill="#e8e8f2"/><path d="M0.3 7.2 L7 0.6 L13.7 7.2 L12.6 8.3 L7 2.8 L1.4 8.3Z" fill="#e0453d"/><rect x="10" y="1.2" width="1.8" height="3" fill="#e0453d"/><rect x="5.200" y="8" width="3.800" height="5.800" fill="#e0643a"/></svg><svg style="left:418px;top:13px" width="16" height="16" viewBox="0 0 16 16"><rect width="16" height="16" fill="#cfe4f8"/><rect width="16" height="3.5" fill="#4a9fe8"/><rect width="3.5" height="16" fill="#4a9fe8"/><rect x="3.5" y="0" width="0.9" height="16" fill="#6fb1ec"/><rect x="0" y="3.5" width="16" height="0.9" fill="#6fb1ec"/><rect x="6.6" y="0" width="0.9" height="16" fill="#6fb1ec"/><rect x="0" y="6.6" width="16" height="0.9" fill="#6fb1ec"/><rect x="9.7" y="0" width="0.9" height="16" fill="#6fb1ec"/><rect x="0" y="9.7" width="16" height="0.9" fill="#6fb1ec"/><rect x="12.8" y="0" width="0.9" height="16" fill="#6fb1ec"/><rect x="0" y="12.8" width="16" height="0.9" fill="#6fb1ec"/><rect x="15.2" y="0" width="0.8" height="16" fill="#6fb1ec"/><rect x="0" y="15.2" width="16" height="0.8" fill="#6fb1ec"/><rect x="4.4" y="4.4" width="2.200" height="2.200" fill="#f4f9fe"/><rect x="4.4" y="7.5" width="2.200" height="2.200" fill="#f4f9fe"/><rect x="4.4" y="10.6" width="2.200" height="2.200" fill="#f4f9fe"/><rect x="4.4" y="13.7" width="2.200" height="2.200" fill="#f4f9fe"/><rect x="7.5" y="4.4" width="2.200" height="2.200" fill="#f4f9fe"/><rect x="7.5" y="7.5" width="2.200" height="2.200" fill="#f4f9fe"/><rect x="7.5" y="10.6" width="2.200" height="2.200" fill="#f4f9fe"/><rect x="7.5" y="13.7" width="2.200" height="2.200" fill="#f4f9fe"/><rect x="10.6" y="4.4" width="2.200" height="2.200" fill="#f4f9fe"/><rect x="10.6" y="7.5" width="2.200" height="2.200" fill="#f4f9fe"/><rect x="10.6" y="10.6" width="2.200" height="2.200" fill="#f4f9fe"/><rect x="10.6" y="13.7" width="2.200" height="2.200" fill="#f4f9fe"/><rect x="13.7" y="4.4" width="2.200" height="2.200" fill="#f4f9fe"/><rect x="13.7" y="7.5" width="2.200" height="2.200" fill="#f4f9fe"/><rect x="13.7" y="10.6" width="2.200" height="2.200" fill="#f4f9fe"/><rect x="13.7" y="13.7" width="2.200" height="2.200" fill="#f4f9fe"/></svg><svg style="left:302px;top:44px" width="16" height="16" viewBox="0 0 16 16"><rect width="16" height="16" fill="#cfe4f8"/><rect width="16" height="3.5" fill="#4a9fe8"/><rect width="3.5" height="16" fill="#4a9fe8"/><rect x="3.5" y="0" width="0.9" height="16" fill="#6fb1ec"/><rect x="0" y="3.5" width="16" height="0.9" fill="#6fb1ec"/><rect x="6.6" y="0" width="0.9" height="16" fill="#6fb1ec"/><rect x="0" y="6.6" width="16" height="0.9" fill="#6fb1ec"/><rect x="9.7" y="0" width="0.9" height="16" fill="#6fb1ec"/><rect x="0" y="9.7" width="16" height="0.9" fill="#6fb1ec"/><rect x="12.8" y="0" width="0.9" height="16" fill="#6fb1ec"/><rect x="0" y="12.8" width="16" height="0.9" fill="#6fb1ec"/><rect x="15.2" y="0" width="0.8" height="16" fill="#6fb1ec"/><rect x="0" y="15.2" width="16" height="0.8" fill="#6fb1ec"/><rect x="4.4" y="4.4" width="2.200" height="2.200" fill="#f4f9fe"/><rect x="4.4" y="7.5" width="2.200" height="2.200" fill="#f4f9fe"/><rect x="4.4" y="10.6" width="2.200" height="2.200" fill="#f4f9fe"/><rect x="4.4" y="13.7" width="2.200" height="2.200" fill="#f4f9fe"/><rect x="7.5" y="4.4" width="2.200" height="2.200" fill="#f4f9fe"/><rect x="7.5" y="7.5" width="2.200" height="2.200" fill="#f4f9fe"/><rect x="7.5" y="10.6" width="2.200" height="2.200" fill="#f4f9fe"/><rect x="7.5" y="13.7" width="2.200" height="2.200" fill="#f4f9fe"/><rect x="10.6" y="4.4" width="2.200" height="2.200" fill="#f4f9fe"/><rect x="10.6" y="7.5" width="2.200" height="2.200" fill="#f4f9fe"/><rect x="10.6" y="10.6" width="2.200" height="2.200" fill="#f4f9fe"/><rect x="10.6" y="13.7" width="2.200" height="2.200" fill="#f4f9fe"/><rect x="13.7" y="4.4" width="2.200" height="2.200" fill="#f4f9fe"/><rect x="13.7" y="7.5" width="2.200" height="2.200" fill="#f4f9fe"/><rect x="13.7" y="10.6" width="2.200" height="2.200" fill="#f4f9fe"/><rect x="13.7" y="13.7" width="2.200" height="2.200" fill="#f4f9fe"/></svg><svg style="left:252px;top:76px" width="16" height="16" viewBox="0 0 16 16"><path d="M4.9 8.2 L0.8 12.5" stroke="#5f6f7c" stroke-width="1.6" stroke-linecap="round"/><circle cx="8" cy="4.8" r="4.6" fill="#7ab5ea" stroke="#6a7a88" stroke-width="0.9"/><circle cx="11.8" cy="11.6" r="4.3" fill="#4f9a55"/><path d="M10.4 9.4 L14.2 11.6 L10.4 13.8Z" fill="#fff"/></svg><svg style="left:379px;top:76.5px" width="16" height="16" viewBox="0 0 16 16"><rect x="0.6" y="0.6" width="11" height="9.6" fill="#f1f1f6" stroke="#5a5fc0" stroke-width="1.1"/><path d="M0.6 2.6H4M0.6 4.8H4M0.6 7H4" stroke="#5a5fc0" stroke-width="1.1"/><rect x="0.6" y="0.6" width="3.4" height="9.6" fill="none" stroke="#5a5fc0" stroke-width="0.6"/><path d="M12.8 12.0 L15.5 14.6" stroke="#5f6f7c" stroke-width="1.4" stroke-linecap="round"/><circle cx="10.3" cy="9.6" r="3.5" fill="#7ab5ea" stroke="#6a7a88" stroke-width="0.9"/></svg><svg style="left:564px;top:77px" width="14" height="14" viewBox="0 0 14 14"><circle cx="7" cy="7" r="7" fill="#4f9a55"/><path d="M7 3.2V10.8M3.2 7H10.8" stroke="#fff" stroke-width="2.2"/></svg><svg style="left:252px;top:114px" width="24" height="32" viewBox="0 0 24 32"><rect x="1.2" y="4.5" width="21.6" height="26" rx="2.5" fill="#ebebeb" stroke="#566a78" stroke-width="2.2"/><path d="M5.5 4 H18.5 V7.2 H5.5Z" fill="#9aa8b2"/><circle cx="12" cy="3.2" r="2.6" fill="#ebebeb" stroke="#9aa8b2" stroke-width="1.6"/><path d="M5.5 18.5 L10 23 L18.5 13" fill="none" stroke="#4caf50" stroke-width="3.2"/></svg><svg style="left:261px;top:175px" width="15" height="15" viewBox="0 0 15 15"><path d="M6.0 8.8 L1 13.8" stroke="#5f6f7c" stroke-width="1.8" stroke-linecap="round"/><circle cx="9.3" cy="5.5" r="4.6" fill="#7ab5ea" stroke="#6a7a88" stroke-width="0.9"/></svg><svg style="left:659px;top:78px" width="3" height="12" viewBox="0 0 3 12"><path d="M1.500 0V12" stroke="#c0c4e0" stroke-width="1.4" stroke-dasharray="2 1.4"/></svg><svg style="left:759px;top:78px" width="3" height="12" viewBox="0 0 3 12"><path d="M1.500 0V12" stroke="#c0c4e0" stroke-width="1.4" stroke-dasharray="2 1.4"/></svg><svg style="left:674px;top:77px" width="16" height="14" viewBox="0 0 16 14"><rect x="5.600" y="0.500" width="10" height="9" fill="#e8eef6" stroke="#c0d0e8" stroke-width="0.9"/><path d="M5.600 3.500H15.600M5.600 6.500H15.600M9 0.500V9.500M12.4 0.500V9.500" stroke="#c0d0e8" stroke-width="0.800"/><rect x="0.500" y="4.400" width="10.400" height="9" fill="#eef4ee" stroke="#a8cfa8" stroke-width="1"/><path d="M0.500 7.400H10.900M0.500 10.400H10.900M4 4.400V13.400M7.400 4.400V13.400" stroke="#a8cfa8" stroke-width="0.900"/></svg><svg style="left:699px;top:82px" width="9" height="5" viewBox="0 0 9 5"><path d="M0 0H9L4.5 4.600Z" fill="#b9bedb"/></svg><svg style="left:717px;top:78px" width="14" height="11" viewBox="0 0 14 11"><rect x="0.500" y="0.500" width="4" height="4" fill="none" stroke="#b5bbe0" stroke-width="0.9"/><path d="M2.500 1.500V3.500M1.500 2.500H3.500" stroke="#b5bbe0" stroke-width="0.700"/><rect x="0.500" y="6.600" width="4" height="4" fill="none" stroke="#b5bbe0" stroke-width="0.900"/><path d="M7 2.500H14M7 8.600H14" stroke="#b5bbe0" stroke-width="1"/></svg><svg style="left:741px;top:82px" width="9" height="5" viewBox="0 0 9 5"><path d="M0 0H9L4.5 4.600Z" fill="#b9bedb"/></svg><svg style="left:780px;top:78px" width="4" height="13" viewBox="0 0 4 13"><circle cx="2" cy="1.800" r="1.700" fill="#3f4d96"/><circle cx="2" cy="6.400" r="1.700" fill="#3f4d96"/><circle cx="2" cy="11" r="1.700" fill="#3f4d96"/></svg><svg style="left:1632px;top:76px" width="18" height="16" viewBox="0 0 18 16"><path d="M5.5 8.5 L1 12.6" stroke="#5f6f7c" stroke-width="1.7" stroke-linecap="round"/><circle cx="9" cy="5.3" r="4.8" fill="#7ab5ea" stroke="#6a7a88" stroke-width="0.9"/><path d="M8.6 15.6 L9.2 13.4 L15.2 7.8 L16.6 9.200 L10.600 15Z" fill="#f0a030"/><path d="M15.2 7.800 L16 7.000 L17.4 8.400 L16.6 9.2Z" fill="#e87a8a"/></svg><svg style="left:1663px;top:76.6px" width="16" height="16" viewBox="0 0 16 16"><path d="M0 1.4 Q0 0.400 1 0.4 H5 L6.4 1.8 H12 Q13 1.800 13 2.800 V10.400 H0Z" fill="#e0c078"/><path d="M0 3.400 H13 V10.400 H0Z" fill="#ead592"/><path d="M12.9 12.1 L15.8 15" stroke="#5f6f7c" stroke-width="1.4" stroke-linecap="round"/><circle cx="10.6" cy="9.8" r="3.3" fill="#7ab5ea" stroke="#6a7a88" stroke-width="0.9"/></svg><svg style="left:1687px;top:82px" width="8" height="5" viewBox="0 0 8 5"><path d="M0 0H8L4 4.200Z" fill="#4a5aa8"/></svg><svg style="left:1707px;top:76px" width="16" height="16" viewBox="0 0 16 16"><rect x="4.6" y="0.4" width="5" height="12.6" fill="#d4e8fa" stroke="#8ac0f0" stroke-width="0.8"/><path d="M4.600 3.400H9.600M4.600 6.400H9.600M4.600 9.400H9.600M7 0.4V13" stroke="#8ac0f0" stroke-width="0.700"/><rect x="0.600" y="0.600" width="4.200" height="12.4" fill="#f4faf4" stroke="#3d9a48" stroke-width="1.2"/><path d="M0.600 3.600H4.800M0.600 6.600H4.800M0.600 9.600H4.800" stroke="#3d9a48" stroke-width="0.800"/><path d="M3.600 15.400 L10 9" stroke="#7a8a98" stroke-width="1.800"/><path d="M13.600 5.400 A2.800 2.800 0 1 0 14.600 9 L12.4 9 L11.400 7.600Z" fill="#6a7a88"/><path d="M7.400 7.800 L8.600 6.600 L14 12 Q15 14 13.6 15.200 Q12.4 15.600 11.600 14.800Z" fill="#f0b030"/></svg><svg style="left:4px;top:42.5px" width="16" height="25" viewBox="0 0 16 25"><path d="M0 3 Q0 0 3 0 H13 Q16 0 16 3 V24 L8 19.600 L0 24Z" fill="#4da3e8"/></svg><svg style="left:2.4px;top:85.5px" width="19" height="18" viewBox="0 0 19 18"><rect x="4.2" y="0.8" width="14" height="13" rx="2.2" fill="none" stroke="#7a7f88" stroke-width="1.5"/><rect x="0.8" y="4.6" width="14" height="12.6" rx="2.2" fill="#c5cae3" stroke="#5b80aa" stroke-width="1.5"/></svg><svg style="left:0.8px;top:124px" width="23" height="24" viewBox="0 0 23 24"><g transform="translate(-0.6,-0.5) scale(1.08)"><path d="M10.500 2.200 A9 9 0 1 1 3.200 6.200" fill="none" stroke="#4a9ad4" stroke-width="1.600"/><path d="M4.200 5 A9 9 0 0 1 10.500 2.200" fill="none" stroke="#b8d6ee" stroke-width="1.600"/><path d="M12.800 -0.800 L8.200 2.200 L12.800 5.200Z" fill="#4a9ad4"/><path d="M8.600 7.600 L11.600 11.200 L8.600 14" fill="none" stroke="#4a3030" stroke-width="1.300"/></g></svg><svg style="left:0px;top:163.5px" width="24" height="24" viewBox="0 0 24 24"><rect x="0" y="1" width="16.5" height="13.5" fill="#efeff5" stroke="#5a5fc0" stroke-width="1.5"/><path d="M0 3.8H5.5M0 6.6H5.5M0 9.4H5.5M0 12.2H5.5" stroke="#5a5fc0" stroke-width="1.5"/><path d="M5.8 1V14.5" stroke="#5a5fc0" stroke-width="0.8"/><path d="M19.3 18.2 L22.8 22.2" stroke="#5f6f7c" stroke-width="2" stroke-linecap="round"/><circle cx="16.2" cy="14.6" r="4.8" fill="#6fb0e8" stroke="#6a7a88" stroke-width="0.9"/></svg><svg style="left:0px;top:203px" width="24" height="24" viewBox="0 0 24 24"><path d="M20.30 9.09 L23.73 9.47 L23.73 14.53 L20.30 14.91 L19.93 15.81 L22.08 18.50 L18.50 22.08 L15.81 19.93 L14.91 20.30 L14.53 23.73 L9.47 23.73 L9.09 20.30 L8.19 19.93 L5.50 22.08 L1.92 18.50 L4.07 15.81 L3.70 14.91 L0.27 14.53 L0.27 9.47 L3.70 9.09 L4.07 8.19 L1.92 5.50 L5.50 1.92 L8.19 4.07 L9.09 3.70 L9.47 0.27 L14.53 0.27 L14.91 3.70 L15.81 4.07 L18.50 1.92 L22.08 5.50 L19.93 8.19Z" fill="#687e90" stroke="#687e90" stroke-width="1.2" stroke-linejoin="round"/><circle cx="12" cy="12" r="6.800" fill="#3d9cf0"/><path d="M9.600 8.300 L16 12 L9.600 15.700Z" fill="#fff"/></svg><svg style="left:3px;top:243px" width="18" height="24" viewBox="0 0 18 24"><path d="M0.7 0.7 H11.5 L16.8 6 V23.3 H0.7Z" fill="#d9dee4" stroke="#8a98a8" stroke-width="1.3"/><path d="M11.5 0.7 V6 H16.8" fill="#eef1f4" stroke="#8a98a8" stroke-width="1"/><circle cx="8.4" cy="13.2" r="5.6" fill="#4a8fe8"/><path d="M8.4 13.2 V7.6 A5.6 5.6 0 0 1 14 13.2Z" fill="#e8853c"/><path d="M8.4 13.2 H14 A5.6 5.6 0 0 1 12.4 17.1Z" fill="#f0c040"/></svg><svg style="left:3px;top:285px" width="20" height="20" viewBox="0 0 20 20"><path d="M2 2 L4 1.5 L12 9.5 L10.5 11Z" fill="#6a7a88"/><path d="M10 10 L12.2 7.8 L19 14.6 Q20 17 18 18.6 Q16 19.6 14.6 18.2Z" fill="#f0a830"/><path d="M1.6 17 L11.5 7.2" stroke="#6a7a88" stroke-width="3" stroke-linecap="round"/><path d="M17.8 1.6 A4.6 4.6 0 1 0 19.6 6.6 L16 7.2 L14 5 L15 1.6Z" fill="#6a7a88"/></svg><svg style="left:0px;top:570px" width="24" height="26" viewBox="0 0 24 26"><path d="M0.5 8 Q10 -2.5 19.5 8 Q10 18.5 0.5 8Z" fill="#f2f2f2" stroke="#5f7080" stroke-width="1.3"/><circle cx="10" cy="8" r="4" fill="#3d8fe8"/><circle cx="10" cy="8" r="1.8" fill="#263a58"/><path d="M15.80 10.70 L17.68 15.91 L23.22 16.09 L18.84 19.49 L20.38 24.81 L15.80 21.70 L11.22 24.81 L12.76 19.49 L8.38 16.09 L13.92 15.91Z" fill="#3d8fe8"/></svg><svg style="left:2.5px;top:611px" width="20" height="24" viewBox="0 0 20 24"><rect x="1" y="3" width="17" height="20" rx="2" fill="#ebebeb" stroke="#5f7080" stroke-width="1.6"/><rect x="6" y="0.8" width="7" height="4" rx="1.2" fill="#ebebeb" stroke="#5f7080" stroke-width="1.3"/><path d="M4.2 19.4 L5.4 15.2 L13.6 7 L16.4 9.8 L8.2 18Z" fill="#f0a030"/><path d="M4.2 19.4 L5.4 15.2 L8.2 18Z" fill="#5f4a3a"/><path d="M12.6 8 L15.4 10.8 L16.4 9.8 L13.6 7Z" fill="#e86a6a"/></svg><svg style="left:0px;top:651.5px" width="24" height="24" viewBox="0 0 24 24"><rect x="0" y="2.5" width="23.5" height="21" rx="2.5" fill="#cfd8dc"/><path d="M0 5 Q0 2.5 2.5 2.5 H21 Q23.5 2.5 23.5 5 V10.5 H0Z" fill="#e05a55"/><rect x="5" y="0" width="2.6" height="6.5" rx="1.3" fill="#b0bec5"/><rect x="16" y="0" width="2.6" height="6.5" rx="1.3" fill="#b0bec5"/><rect x="3.0" y="13.0" width="1.7" height="1.7" fill="#a3b1b8"/><rect x="6.2" y="13.0" width="1.7" height="1.7" fill="#a3b1b8"/><rect x="9.4" y="13.0" width="1.7" height="1.7" fill="#a3b1b8"/><rect x="12.600000000000001" y="13.0" width="1.7" height="1.7" fill="#a3b1b8"/><rect x="15.8" y="13.0" width="1.7" height="1.7" fill="#a3b1b8"/><rect x="19.0" y="13.0" width="1.7" height="1.7" fill="#a3b1b8"/><rect x="3.0" y="16.2" width="1.7" height="1.7" fill="#a3b1b8"/><rect x="6.2" y="16.2" width="1.7" height="1.7" fill="#a3b1b8"/><rect x="9.4" y="16.2" width="1.7" height="1.7" fill="#a3b1b8"/><rect x="12.600000000000001" y="16.2" width="1.7" height="1.7" fill="#a3b1b8"/><rect x="15.8" y="16.2" width="1.7" height="1.7" fill="#a3b1b8"/><rect x="19.0" y="16.2" width="1.7" height="1.7" fill="#a3b1b8"/><rect x="3.0" y="19.4" width="1.7" height="1.7" fill="#a3b1b8"/><rect x="6.2" y="19.4" width="1.7" height="1.7" fill="#a3b1b8"/><rect x="9.4" y="19.4" width="1.7" height="1.7" fill="#a3b1b8"/><rect x="12.600000000000001" y="19.4" width="1.7" height="1.7" fill="#a3b1b8"/><rect x="15.8" y="19.4" width="1.7" height="1.7" fill="#a3b1b8"/><rect x="19.0" y="19.4" width="1.7" height="1.7" fill="#a3b1b8"/></svg><svg style="left:1.5px;top:691px" width="23" height="24" viewBox="0 0 23 24"><path d="M0.600 0.600 H9.600 L14.600 5.600 V18.800 H0.600Z" fill="#e4e8ee" stroke="#8a9aaa" stroke-width="1.200"/><path d="M9.600 0.600 V5.600 H14.600" fill="none" stroke="#8a9aaa" stroke-width="1"/><path d="M19.96 15.70 L22.06 15.84 L22.06 18.56 L19.96 18.70 L19.71 19.29 L21.10 20.88 L19.18 22.80 L17.59 21.41 L17.00 21.66 L16.86 23.76 L14.14 23.76 L14.00 21.66 L13.41 21.41 L11.82 22.80 L9.90 20.88 L11.29 19.29 L11.04 18.70 L8.94 18.56 L8.94 15.84 L11.04 15.70 L11.29 15.11 L9.90 13.52 L11.82 11.60 L13.41 12.99 L14.00 12.74 L14.14 10.64 L16.86 10.64 L17.00 12.74 L17.59 12.99 L19.18 11.60 L21.10 13.52 L19.71 15.11Z" fill="#687e90" stroke="#687e90" stroke-width="0.800" stroke-linejoin="round"/><circle cx="15.500" cy="17.200" r="2" fill="#ebebeb"/></svg><svg style="left:0px;top:732px" width="24" height="23" viewBox="0 0 24 23"><path d="M3.4 9.600 V7.200 Q3.4 5 5.6 5 H17" fill="none" stroke="#4f9a58" stroke-width="3"/><path d="M15.6 0.600 L22.4 5 L15.6 9.400Z" fill="#4f9a58"/><path d="M20.4 12.800 V15.300 Q20.4 17.500 18.2 17.500 H7" fill="none" stroke="#4f9a58" stroke-width="3"/><path d="M8.400 13.100 L1.600 17.500 L8.400 21.900Z" fill="#4f9a58"/></svg>
<div class="a" style="left:633px;top:252px;width:460px;height:233px;background:#fdfdfd;border:1px solid rgba(70,70,70,.55);box-shadow:0 3px 10px rgba(0,0,0,.42)"></div>
<div class="a" style="left:634px;top:253px;width:458px;height:28px;background:#2f4799"></div>
<div class="t " style="left:646px;top:260px;color:#fff;font-weight:bold;letter-spacing:-0.097px">Anzahl der Datensätze</div>
<div class="a" style="left:662px;top:301px;width:40px;height:40px;background:#2a97f0;border-radius:50%"></div>
<div class="a" style="left:680px;top:319px;width:4.5px;height:11.5px;background:#fff"></div>
<div class="a" style="left:679.5px;top:311px;width:5.5px;height:5.5px;background:#fff;border-radius:50%"></div>
<div class="t " style="left:718px;top:298px;color:#222;letter-spacing:-0.076px">265 Datensätze erfüllen die Suchbedingung.</div>
<div class="t " style="left:718px;top:330px;color:#222;letter-spacing:-0.066px">Bei der Ausführung der Suche werden nur die ersten 100</div>
<div class="t " style="left:718px;top:346px;color:#222;letter-spacing:-0.207px">Ergebnisse angezeigt.</div>
<div class="t " style="left:758px;top:374px;color:#222;letter-spacing:-0.165px">Zeitpunkt: 07.02.2025 15:28</div>
<div class="a" style="left:744px;top:381px;width:4px;height:4px;background:#222;border-radius:50%"></div>
<div class="t " style="left:758px;top:390px;color:#222;letter-spacing:-0.063px">Bereich: Aktivitäten</div>
<div class="a" style="left:744px;top:397px;width:4px;height:4px;background:#222;border-radius:50%"></div>
<div class="t " style="left:758px;top:406px;color:#222;letter-spacing:-0.100px">Suche: Standardsuche für Aktivitäten</div>
<div class="a" style="left:744px;top:413px;width:4px;height:4px;background:#222;border-radius:50%"></div>
<div class="a" style="left:749px;top:439px;width:80px;height:29px;background:#3f5cc3;border:1.5px solid #e8a33d;border-radius:2px"></div>
<div class="t " style="left:762px;top:446px;color:#fff;font-weight:bold;letter-spacing:-0.210px">Schließen</div>
<div class="a" style="left:837px;top:439px;width:109px;height:29px;background:#fff;border:1px solid #3a4fa5;border-radius:2px"></div>
<div class="t " style="left:845.5px;top:446px;color:#2f4799;font-weight:bold;letter-spacing:-0.020px">Erneut ermitteln</div>
<div class="a" style="left:954px;top:439px;width:110px;height:29px;background:#fff;border:1px solid #3a4fa5;border-radius:2px"></div>
<div class="t " style="left:962px;top:446px;color:#2f4799;font-weight:bold;letter-spacing:-0.284px">Suche ausführen</div>
</body></html>
